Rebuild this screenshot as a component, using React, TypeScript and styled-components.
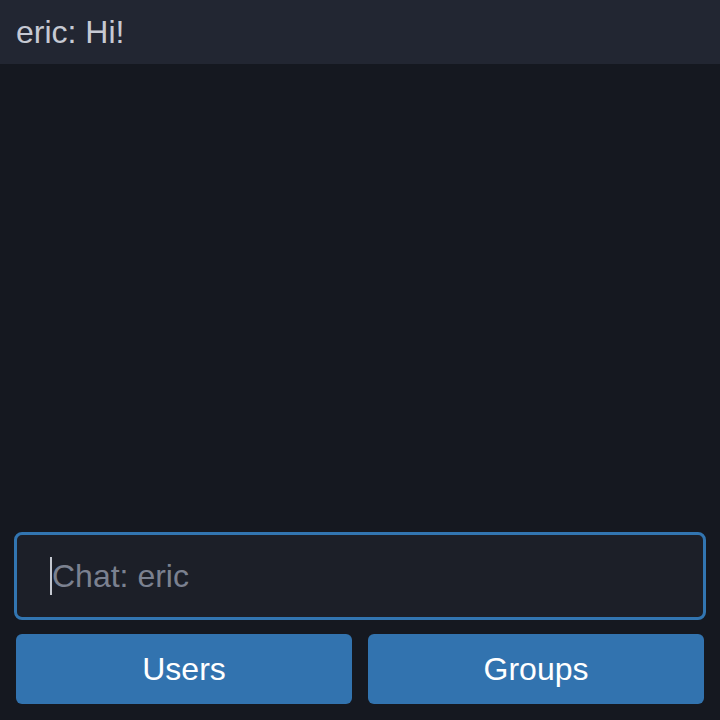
import React from "react";
import styled, { createGlobalStyle } from "styled-components";

const Global = createGlobalStyle`
  html, body { margin: 0; padding: 0; background: #151820; }
  body { font-family: "Liberation Sans", Arial, sans-serif; }
  * { box-sizing: border-box; }
`;

const Page = styled.div`
  width: 720px;
  height: 720px;
  display: flex;
  flex-direction: column;
  background: #151820;
`;

const Header = styled.div`
  height: 64px;
  background: #222632;
  display: flex;
  align-items: center;
  padding: 0 16px;
  color: #c6c9d3;
  font-size: 32px;
`;

const Messages = styled.div`
  flex: 1;
`;

const Footer = styled.div`
  display: flex;
  flex-direction: column;
  padding: 0 14px 16px;
  gap: 14px;
`;

const InputWrap = styled.div`
  position: relative;
`;

const ChatInput = styled.input`
  display: block;
  height: 88px;
  width: 100%;
  background: #1c1f28;
  border: 3px solid #3275b1;
  border-radius: 8px;
  padding: 0 0 0 35px;
  color: #d0d3db;
  font-family: "Liberation Sans", Arial, sans-serif;
  font-size: 32px;
  outline: none;
  caret-color: transparent;
  &::placeholder { color: #7b8190; }
`;

const Caret = styled.span`
  position: absolute;
  left: 36px;
  top: 25px;
  width: 1.5px;
  height: 38px;
  background: #c4c8d0;
  pointer-events: none;
`;

const ButtonRow = styled.div`
  display: grid;
  grid-template-columns: 1fr 1fr;
  gap: 16px;
  padding: 0 2px;
`;

const Button = styled.button`
  height: 70px;
  background: #3273af;
  border: none;
  border-radius: 6px;
  color: #ffffff;
  font-family: "Liberation Sans", Arial, sans-serif;
  font-size: 32px;
  padding: 0;
  cursor: pointer;
`;

export default function App() {
  return (
    <Page>
      <Global />
      <Header>eric: Hi!</Header>
      <Messages />
      <Footer>
        <InputWrap>
          <ChatInput placeholder="Chat: eric" />
          <Caret />
        </InputWrap>
        <ButtonRow>
          <Button>Users</Button>
          <Button>Groups</Button>
        </ButtonRow>
      </Footer>
    </Page>
  );
}
